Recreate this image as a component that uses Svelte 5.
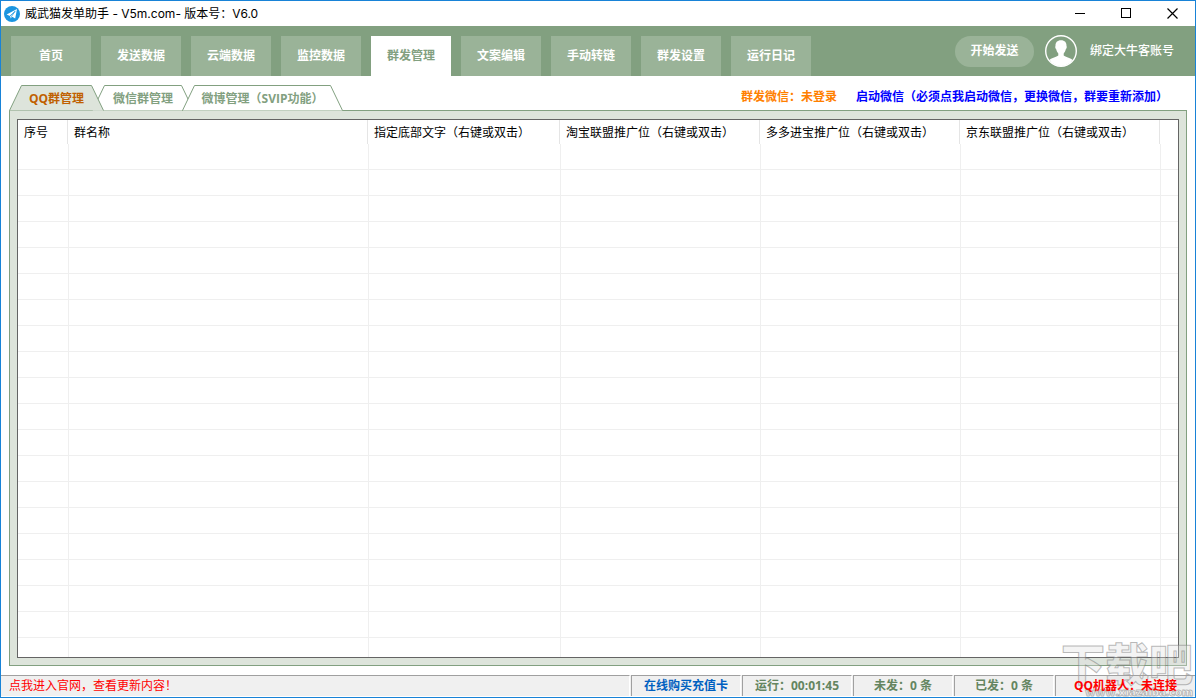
<script>
  // Main window of the group-sending assistant: title bar, page nav,
  // group tabs, the group table and the status bar.
  let page = $state('群发管理');
  let tab = $state('qq');

  const pages = ['首页', '发送数据', '云端数据', '监控数据', '群发管理', '文案编辑', '手动转链', '群发设置', '运行日记'];

  // w is the full width of the tab, slanted sides included
  const tabs = [
    { id: 'qq', label: 'QQ群管理', w: 95 },
    { id: 'wx', label: '微信群管理', w: 102 },
    { id: 'wb', label: '微博管理（SVIP功能）', w: 161 }
  ];

  const columns = [
    { name: '序号', w: 50 },
    { name: '群名称', w: 300 },
    { name: '指定底部文字（右键或双击）', w: 192 },
    { name: '淘宝联盟推广位（右键或双击）', w: 200 },
    { name: '多多进宝推广位（右键或双击）', w: 200 },
    { name: '京东联盟推广位（右键或双击）', w: 200 }
  ];
  const rows = Array.from({ length: 20 }, (_, i) => i);

  function outline(w) { return `M0.5 25.5 L12.5 0.5 H${w - 12.5} L${w - 0.5} 25.5`; }
</script>

<div class="window">
  <header class="title">
    <svg class="logo" width="16" height="16" viewBox="0 0 16 16" aria-hidden="true">
      <circle cx="8" cy="8" r="8" fill="#1b95e0" />
      <path d="M2.6 8.6 L13 3 L11.2 12.4 L8.2 10.8 L6.4 13 L6 9.9 Z" fill="#fff" />
      <path d="M6 9.9 L11.2 5.2 L7.4 10.4 L6.4 13" fill="none" stroke="#1b95e0" stroke-width="0.8" />
    </svg>
    <span class="name">威武猫发单助手 - V5m.com- 版本号：V6.0</span>
    <button class="win" aria-label="最小化"><svg width="11" height="11" viewBox="0 0 11 11"><path d="M0 5.5 H10" stroke="#000" /></svg></button>
    <button class="win" aria-label="最大化"><svg width="11" height="11" viewBox="0 0 11 11"><rect x="0.5" y="0.5" width="9" height="9" fill="none" stroke="#000" /></svg></button>
    <button class="win" aria-label="关闭"><svg width="11" height="11" viewBox="0 0 11 11"><path d="M0.5 0.5 L10.5 10.5 M10.5 0.5 L0.5 10.5" stroke="#000" stroke-width="1.2" /></svg></button>
  </header>

  <div class="top">
    <nav>
      {#each pages as p (p)}
        <button class="page" class:on={page === p} onclick={() => (page = p)}>{p}</button>
      {/each}
    </nav>
    <button class="start">开始发送</button>
    <button class="account">
      <svg width="32" height="32" viewBox="0 0 32 32" aria-hidden="true">
        <circle cx="16" cy="16" r="15.3" fill="none" stroke="#fff" stroke-width="1.4" />
        <path d="M16 5.2 C12.2 5.2 10.3 7.6 10.5 11 C9.9 11.6 10.3 13.6 11.2 14.3 C11.6 16.2 12.4 17.4 13.3 18.4 V20.6 C11.5 22.3 6.8 22.6 4.6 25 C7.4 29 11.4 31 16 31 C20.6 31 24.6 29 27.4 25 C25.2 22.6 20.5 22.3 18.7 20.6 V18.4 C19.6 17.4 20.4 16.2 20.8 14.3 C21.7 13.6 22.1 11.6 21.5 11 C21.7 7.6 19.8 5.2 16 5.2 Z" fill="#fff" />
      </svg>
      <span>绑定大牛客账号</span>
    </button>
  </div>

  <div class="tabbar">
    <div class="tabs" role="tablist">
      {#each tabs as t (t.id)}
        <button class="tab" class:on={tab === t.id} class:mid={t.id === 'wx'} role="tab" aria-selected={tab === t.id} style="width: {t.w}px" onclick={() => (tab = t.id)}>
          <svg class="shape" width={t.w} height="26" aria-hidden="true"><path d={outline(t.w)} /></svg>
          <span>{t.label}</span>
        </button>
      {/each}
    </div>
    <span class="login">群发微信：未登录</span>
    <button class="launch">启动微信（必须点我启动微信，更换微信，群要重新添加）</button>
  </div>

  <main class="panel">
    <div class="grid">
      <table>
        <colgroup>
          {#each columns as c (c.name)}<col style="width: {c.w}px" />{/each}
          <col />
        </colgroup>
        <thead>
          <tr>
            {#each columns as c (c.name)}<th scope="col">{c.name}</th>{/each}
            <td class="rest"></td>
          </tr>
        </thead>
        <tbody>
          {#each rows as r (r)}
            <tr>
              {#each columns as c (c.name)}<td></td>{/each}
              <td></td>
            </tr>
          {/each}
        </tbody>
      </table>
    </div>
  </main>

  <footer class="status">
    <a class="cell news" href="#news">点我进入官网，查看更新内容！</a>
    <a class="cell buy" href="#buy">在线购买充值卡</a>
    <span class="cell wide">运行：00:01:45</span>
    <span class="cell">未发：0 条</span>
    <span class="cell">已发：0 条</span>
    <span class="cell robot">QQ机器人：未连接</span>
  </footer>

  <div class="mark" aria-hidden="true">
    <span class="big">下载吧</span>
    <span class="url">www.xiazaiba.com</span>
  </div>
</div>

<style>
  :global(body) { margin: 0; }
  .window { --green: #82a080; --line: #efefef; position: relative; box-sizing: border-box; height: 100vh; border: 1px solid #1883d7; background: #fff; display: flex; flex-direction: column; overflow: hidden;
    font: 12px/16px "Open Sans", "Noto Sans CJK SC", sans-serif; color: #000; }
  button { font: inherit; color: inherit; background: none; border: 0; padding: 0; cursor: pointer; white-space: nowrap; }
  svg { display: block; }

  .title { flex: none; height: 25px; display: flex; align-items: center; padding-left: 3px; font-family: Inter, "Noto Sans CJK SC", sans-serif; }
  .name { flex: 1; margin-left: 5px; white-space: nowrap; }
  .win { width: 46px; height: 25px; display: flex; align-items: center; justify-content: center; }

  .top { flex: none; height: 50px; background: var(--green); color: #fff; display: flex; align-items: center; padding: 0 21px 0 10px; font-weight: 700; }
  nav { flex: 1; align-self: flex-end; display: flex; gap: 10px; }
  .page { width: 80px; height: 40px; background: #9ab398; }
  .page.on { background: #fff; color: var(--green); }
  .start { width: 79px; height: 31px; border-radius: 16px; background: #9ab398; margin-right: 11px; }
  .account { display: flex; align-items: center; gap: 13px; font-weight: 500; }

  .tabbar { flex: none; height: 34px; display: flex; align-items: center; padding: 0 27px 0 8px; font-weight: 700; }
  .tabs { flex: 1; align-self: flex-end; display: flex; }
  .tab { position: relative; z-index: 1; height: 26px; margin-bottom: -1px; padding-top: 2px; color: var(--green); }
  .tab + .tab { margin-left: -12px; }
  .tab.mid { z-index: 0; }
  .tab.on { z-index: 2; color: #c06000; }
  .tab span { position: relative; }
  .shape { position: absolute; left: 0; top: 0; }
  .shape path { fill: #fff; stroke: var(--green); }
  .tab:not(.on) { border-bottom: 1px solid var(--green); }
  .tab.on .shape path { fill: #dde4db; }
  .login { color: #ff8000; margin-right: 19px; padding-top: 8px; }
  .launch { color: #00f; font-weight: 700; padding-top: 8px; }

  .panel { flex: 1; min-height: 0; margin: 0 8px 9px; padding: 8px 7px 7px; border: 1px solid var(--green); background: #dde4db; display: flex; }
  .grid { flex: 1; min-width: 0; border: 1px solid #646464; background: #fff; overflow: hidden; }
  table { width: 100%; table-layout: fixed; border-collapse: separate; border-spacing: 0; }
  th { box-sizing: border-box; height: 24px; padding: 2px 0 0 6px; border-right: 1px solid #e5e5e5; text-align: left; font-weight: 400; white-space: nowrap; }
  td { box-sizing: border-box; height: 26px; padding: 0; border-bottom: 1px solid var(--line); border-left: 1px solid var(--line); }
  td:first-child { border-left: 0; }
  td.rest { height: 24px; border: 0; }

  .status { flex: none; height: 21px; margin-bottom: 1px; background: #f0f0f0; display: flex; gap: 1px; font-weight: 700; color: #648560; }
  .cell { box-sizing: border-box; width: 100px; border: solid #a0a0a0; border-width: 1px 0 0 1px; border-right: 1px solid #fff; display: flex; align-items: center; justify-content: center; white-space: nowrap; text-decoration: none; }
  .news { flex: 1; border-left: 0; justify-content: flex-start; padding-left: 8px; font-weight: 400; color: #f00; }
  .buy { width: 110px; color: #0060c0; }
  .wide { width: 110px; }
  .robot { width: 140px; color: #f00; border-right: 0; }

  /* translucent stamp over the bottom right corner; the status text stays on top */
  .mark { position: absolute; right: 2px; bottom: 0; pointer-events: none; display: flex; flex-direction: column; align-items: flex-end; font-weight: 900; color: rgba(225, 225, 225, 0.35); -webkit-text-stroke: 1px rgba(120, 120, 120, 0.5); }
  .big { font-size: 44px; line-height: 46px; }
  .url { font-size: 11px; line-height: 10px; color: rgba(255, 255, 255, 0.6); }
  .robot { position: relative; z-index: 1; background: none; }
</style>
